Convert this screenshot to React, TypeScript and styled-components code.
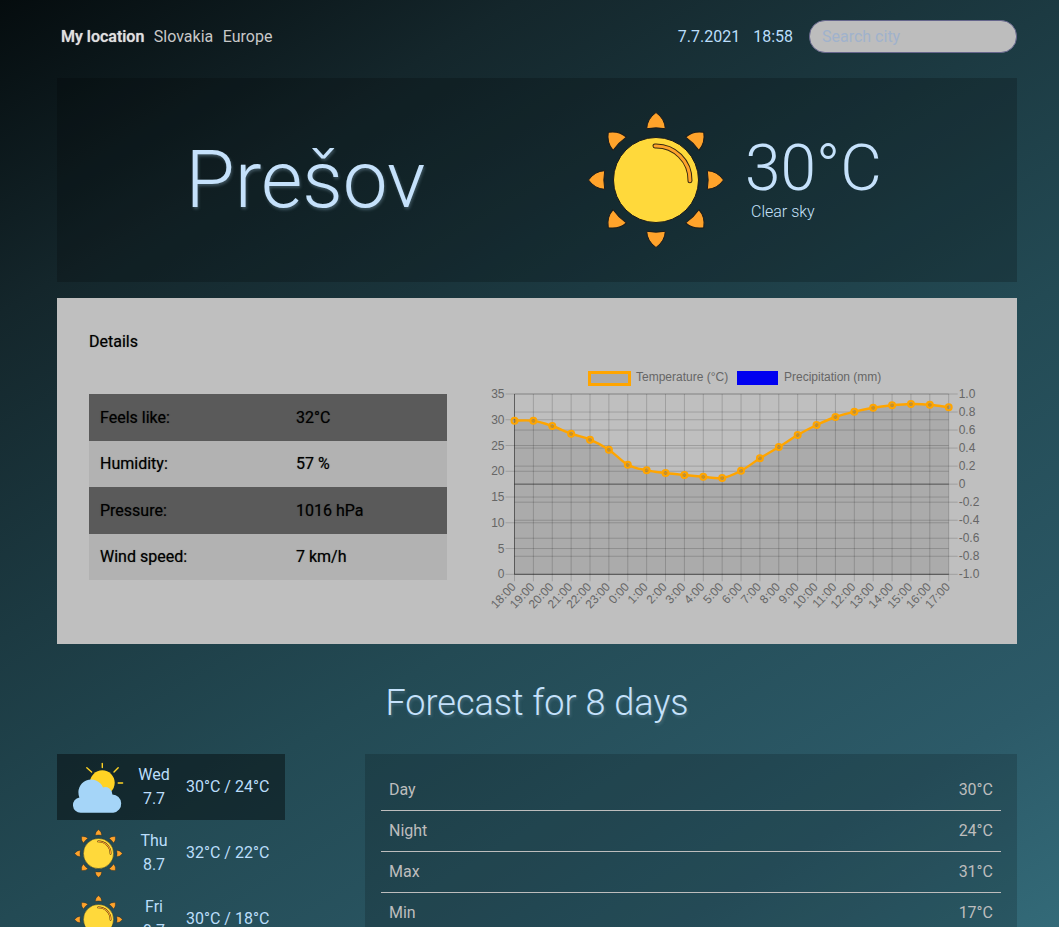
import React from 'react'
import styled, { createGlobalStyle } from 'styled-components'

const GlobalStyle = createGlobalStyle`
  html, body {
    margin: 0;
    padding: 0;
    height: 100%;
    overflow: hidden;
  }
  body {
    font-family: Roboto, "Liberation Sans", sans-serif;
    font-size: 16px;
  }
  * { box-sizing: border-box; }
`

const Page = styled.div`
  height: 100vh;
  overflow: hidden;
  background: linear-gradient(149deg, #050c0e 0%, #14262b 20%, #1c3a42 41%, #234a54 59%, #2c5a68 85%, #336a78 100%);
`

const Container = styled.div`
  width: 960px;
  margin-left: 57px;
  padding-top: 20px;
`

const Header = styled.header`
  display: flex;
  align-items: center;
  justify-content: space-between;
  height: 33px;
  padding-left: 4px;
`

const Nav = styled.nav`
  display: flex;
  gap: 9.5px;
`

const Location = styled.span<{ $main?: boolean }>`
  color: ${p => (p.$main ? '#e0e0e0' : '#c8c8c8')};
  font-weight: ${p => (p.$main ? 500 : 400)};
  text-shadow: ${p => (p.$main ? '0 0 1px rgba(224, 224, 224, 0.8)' : 'none')};
`

const Tools = styled.div`
  display: flex;
  align-items: center;
`

const Clock = styled.span`
  color: #bbdefb;
  margin-right: 13px;
`

const SearchInput = styled.input`
  width: 208px;
  height: 33px;
  margin-left: 3px;
  padding: 0 12px;
  background: #bdbdbd;
  border: 1px solid #66668c;
  border-radius: 16px;
  font-family: inherit;
  font-size: 16px;
  outline: none;
  &::placeholder {
    color: #a0b2cc;
    opacity: 1;
  }
`

const Hero = styled.section`
  display: grid;
  grid-template-columns: 1fr 1fr;
  align-items: center;
  height: 204px;
  margin-top: 25px;
  background: rgba(0, 0, 0, 0.2);
`

const City = styled.h1`
  margin: 0;
  padding-left: 17px;
  text-align: center;
  color: #c5e1fb;
  font-size: 80px;
  font-weight: 300;
  text-shadow: 1px 2px 3px rgba(130, 160, 180, 0.4);
`

const Current = styled.div`
  display: flex;
  align-items: center;
  padding-left: 50px;
`

const CurrentText = styled.div`
  margin-left: 20px;
  margin-top: -3px;
`

const CurrentTemp = styled.div`
  color: #c5e1fb;
  font-size: 64px;
  font-weight: 300;
  line-height: 67px;
`

const CurrentSky = styled.div`
  margin-left: 6px;
  color: #c5e1fb;
  font-weight: 300;
  line-height: 20px;
`

const Details = styled.section`
  height: 346px;
  margin-top: 16px;
  padding: 32px 32px 0;
  background: #bfbfbf;
`

const DetailsTitle = styled.h2`
  margin: 0;
  color: #000;
  font-size: 16px;
  font-weight: 400;
  line-height: 24px;
  text-shadow: 0 0 1px rgba(0, 0, 0, 0.5);
`

const DetailsBody = styled.div`
  display: flex;
  justify-content: space-between;
  align-items: flex-start;
  margin-top: 10px;
`

const Table = styled.div`
  width: 358px;
  margin-top: 30px;
`

const TableRow = styled.div<{ $dark?: boolean }>`
  display: grid;
  grid-template-columns: 196px 1fr;
  align-items: center;
  height: 46.5px;
  padding-left: 11px;
  color: #000;
  font-weight: 400;
  text-shadow: 0 0 1px rgba(0, 0, 0, 0.5);
  background: ${p => (p.$dark ? '#5a5a5a' : '#b2b2b2')};
`

const ChartSvg = styled.svg`
  display: block;
  width: 495px;
  height: 270px;
  overflow: visible;
  font-family: "Liberation Sans", Arial, sans-serif;
  font-size: 12px;
`

const ForecastTitle = styled.h2`
  margin: 36px 0 0;
  text-align: center;
  color: #c5e1fb;
  font-size: 36px;
  font-weight: 300;
  line-height: 46px;
  text-shadow: 1px 2px 3px rgba(130, 160, 180, 0.35);
`

const Forecast = styled.div`
  display: flex;
  justify-content: space-between;
  align-items: flex-start;
  margin-top: 28px;
`

const DayList = styled.div`
  width: 228px;
`

const DayRow = styled.div<{ $active?: boolean }>`
  display: grid;
  grid-template-columns: 82px 30px 1fr;
  align-items: center;
  justify-items: center;
  height: 66px;
  background: ${p => (p.$active ? 'rgba(0, 0, 0, 0.42)' : 'transparent')};
`

const DayName = styled.div`
  color: #bbdefb;
  line-height: 24px;
  text-align: center;
`

const DayTemp = styled.div`
  justify-self: start;
  margin: 0 0 2px 17px;
  color: #bbdefb;
  white-space: nowrap;
`

const DayPanel = styled.div`
  width: 652px;
  padding: 16px;
  background: rgba(0, 0, 0, 0.17);
`

const DayStat = styled.div`
  display: flex;
  justify-content: space-between;
  align-items: center;
  height: 41px;
  padding: 0 8px 2px;
  color: #bdbdbd;
  border-bottom: 1px solid #bdbdbd;
  &:last-child {
    border-bottom: 0;
  }
`

const RAYS = [0, 45, 90, 135, 180, 225, 270, 315]

function SunIcon({ size }: { size: number }) {
  return (
    <svg width={size} height={size} viewBox="-69 -69 138 138" aria-hidden="true">
      {RAYS.map(a => (
        <path
          key={a}
          transform={`rotate(${a})`}
          d="M-9.3 -51.3 Q0 -53 9.3 -51.3 Q9 -61 0 -67.5 Q-9 -61 -9.3 -51.3 Z"
          fill="#ffa32b"
          stroke="#1b1b1b"
          strokeWidth="1"
          strokeLinejoin="round"
        />
      ))}
      <circle r="42.5" fill="#ffd93b" stroke="#1b1b1b" strokeWidth="1" />
      <path d="M-1 -34 A34 34 0 0 1 34 0.7" fill="none" stroke="#3a2a10" strokeWidth="5" strokeLinecap="round" />
      <path d="M-1 -34 A34 34 0 0 1 34 0.7" fill="none" stroke="#ffa32b" strokeWidth="3" strokeLinecap="round" />
    </svg>
  )
}

function CloudSunIcon() {
  return (
    <svg width="52" height="52" viewBox="0 0 52 52" aria-hidden="true">
      <g stroke="#ffd324" strokeWidth="1.4" strokeLinecap="round">
        <line x1="30.3" y1="2.4" x2="30.3" y2="6.6" />
        <line x1="14.8" y1="6.8" x2="19.6" y2="11" />
        <line x1="46.2" y1="6.8" x2="42" y2="11" />
        <line x1="46.2" y1="22" x2="50.6" y2="22" />
      </g>
      <circle cx="30.3" cy="21.7" r="12.4" fill="#ffd324" />
      <path
        d="M8.7 51.7 A7.7 7.7 0 0 1 7.4 36.4 A12.7 12.7 0 0 1 31 26.4 A7.4 7.4 0 0 1 40.4 33.4 A9.2 9.2 0 0 1 41.3 51.7 Z"
        fill="#a5d5f8"
      />
    </svg>
  )
}

const HOURS = [
  '18:00', '19:00', '20:00', '21:00', '22:00', '23:00', '0:00', '1:00', '2:00', '3:00', '4:00', '5:00',
  '6:00', '7:00', '8:00', '9:00', '10:00', '11:00', '12:00', '13:00', '14:00', '15:00', '16:00', '17:00',
]
// y position of every temperature point, measured from the top of the plot
const POINTS_Y = [26.7, 26.7, 32, 39.7, 45.7, 55.7, 70.7, 76.3, 79, 81, 82.7, 84, 76.7, 64.3, 53, 41, 31, 23, 17.7, 13.7, 11.3, 10, 10.7, 13.3]

const PLOT = { left: 24.5, right: 458.7, top: 30, bottom: 210.3 }
const STEP_X = (PLOT.right - PLOT.left) / 23
const LEFT_TICKS = ['35', '30', '25', '20', '15', '10', '5', '0']
const RIGHT_TICKS = ['1.0', '0.8', '0.6', '0.4', '0.2', '0', '-0.2', '-0.4', '-0.6', '-0.8', '-1.0']

function linePath() {
  const pts = POINTS_Y.map((y, i) => [PLOT.left + i * STEP_X, PLOT.top + y])
  let d = `M${pts[0][0]} ${pts[0][1]}`
  for (let i = 0; i < pts.length - 1; i++) {
    const p0 = pts[Math.max(i - 1, 0)]
    const p1 = pts[i]
    const p2 = pts[i + 1]
    const p3 = pts[Math.min(i + 2, pts.length - 1)]
    const c1x = p1[0] + (p2[0] - p0[0]) * 0.17
    const c1y = p1[1] + (p2[1] - p0[1]) * 0.17
    const c2x = p2[0] - (p3[0] - p1[0]) * 0.17
    const c2y = p2[1] - (p3[1] - p1[1]) * 0.17
    d += ` C${c1x} ${c1y} ${c2x} ${c2y} ${p2[0]} ${p2[1]}`
  }
  return d
}

function TemperatureChart() {
  const { left, right, top, bottom } = PLOT
  const height = bottom - top
  const line = linePath()
  const zeroY = top + height / 2
  return (
    <ChartSvg viewBox="0 0 495 270">
      {/* legend */}
      <rect x="99.5" y="8.5" width="40" height="12" fill="rgba(0,0,0,0.1)" stroke="#ffa500" strokeWidth="3" />
      <text x="146" y="17" fill="#666">Temperature (°C)</text>
      <rect x="247" y="7" width="41" height="14" fill="#0000f0" />
      <text x="294" y="17" fill="#666">Precipitation (mm)</text>

      {/* grid */}
      <g stroke="rgba(0,0,0,0.17)" strokeWidth="1">
        {HOURS.map((h, i) => {
          const x = left + i * STEP_X
          return <line key={h} x1={x} y1={top} x2={x} y2={bottom + 7} />
        })}
        {LEFT_TICKS.map((t, i) => {
          const y = top + (i * height) / 7
          return <line key={t} x1={left - 9} y1={y} x2={right} y2={y} />
        })}
        {RIGHT_TICKS.map((t, i) => {
          const y = top + (i * height) / 10
          return <line key={t} x1={left} y1={y} x2={right + 9} y2={y} />
        })}
      </g>
      <line x1={left} y1={zeroY} x2={right} y2={zeroY} stroke="rgba(0,0,0,0.4)" />
      <line x1={left} y1={top} x2={left} y2={bottom} stroke="rgba(0,0,0,0.4)" />
      <line x1={left} y1={bottom} x2={right} y2={bottom} stroke="rgba(0,0,0,0.4)" />

      {/* temperature */}
      <path d={`${line} L${right} ${bottom} L${left} ${bottom} Z`} fill="rgba(0,0,0,0.1)" />
      <path d={line} fill="none" stroke="#ffa500" strokeWidth="2.4" />
      {POINTS_Y.map((y, i) => (
        <circle
          key={HOURS[i]}
          cx={left + i * STEP_X}
          cy={top + y}
          r="3"
          fill="rgba(120,110,70,0.35)"
          stroke="#ffa500"
          strokeWidth="2"
        />
      ))}

      {/* axis labels */}
      <g fill="#666">
        {LEFT_TICKS.map((t, i) => (
          <text key={t} x={left - 10} y={top + (i * height) / 7 + 4} textAnchor="end">{t}</text>
        ))}
        {RIGHT_TICKS.map((t, i) => (
          <text key={t} x={right + 10} y={top + (i * height) / 10 + 4}>{t}</text>
        ))}
        {HOURS.map((h, i) => {
          const x = left + i * STEP_X + 2
          const y = bottom + 13
          return <text key={h} x={x} y={y} textAnchor="end" transform={`rotate(-47 ${x} ${y})`}>{h}</text>
        })}
      </g>
    </ChartSvg>
  )
}

const DAYS = [
  { name: 'Wed', date: '7.7', temp: '30°C / 24°C', cloudy: true },
  { name: 'Thu', date: '8.7', temp: '32°C / 22°C', cloudy: false },
  { name: 'Fri', date: '9.7', temp: '30°C / 18°C', cloudy: false },
]

const STATS = [
  ['Day', '30°C'],
  ['Night', '24°C'],
  ['Max', '31°C'],
  ['Min', '17°C'],
]

const INFO = [
  ['Feels like:', '32°C'],
  ['Humidity:', '57 %'],
  ['Pressure:', '1016 hPa'],
  ['Wind speed:', '7 km/h'],
]

export default function App() {
  return (
    <Page>
      <GlobalStyle />
      <Container>
        <Header>
          <Nav>
            <Location $main>My location</Location>
            <Location>Slovakia</Location>
            <Location>Europe</Location>
          </Nav>
          <Tools>
            <Clock>7.7.2021</Clock>
            <Clock>18:58</Clock>
            <SearchInput placeholder="Search city" />
          </Tools>
        </Header>

        <Hero>
          <City>Prešov</City>
          <Current>
            <SunIcon size={138} />
            <CurrentText>
              <CurrentTemp>30°C</CurrentTemp>
              <CurrentSky>Clear sky</CurrentSky>
            </CurrentText>
          </Current>
        </Hero>

        <Details>
          <DetailsTitle>Details</DetailsTitle>
          <DetailsBody>
            <Table>
              {INFO.map(([label, value], i) => (
                <TableRow key={label} $dark={i % 2 === 0}>
                  <span>{label}</span>
                  <span>{value}</span>
                </TableRow>
              ))}
            </Table>
            <TemperatureChart />
          </DetailsBody>
        </Details>

        <ForecastTitle>Forecast for 8 days</ForecastTitle>
        <Forecast>
          <DayList>
            {DAYS.map(day => (
              <DayRow key={day.name} $active={day.cloudy}>
                {day.cloudy ? <CloudSunIcon /> : <SunIcon size={49} />}
                <DayName>
                  {day.name}
                  <br />
                  {day.date}
                </DayName>
                <DayTemp>{day.temp}</DayTemp>
              </DayRow>
            ))}
          </DayList>
          <DayPanel>
            {STATS.map(([label, value]) => (
              <DayStat key={label}>
                <span>{label}</span>
                <span>{value}</span>
              </DayStat>
            ))}
          </DayPanel>
        </Forecast>
      </Container>
    </Page>
  )
}
